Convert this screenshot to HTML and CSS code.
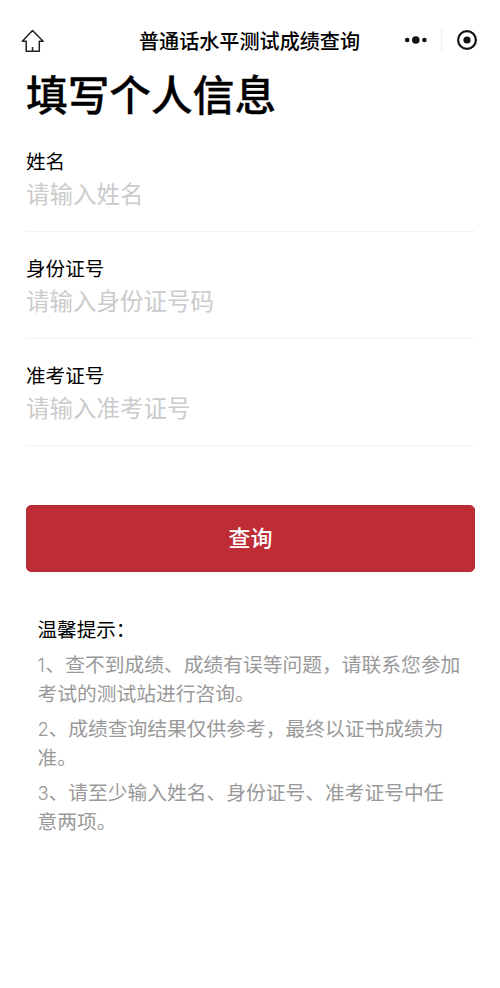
FILE: index.html
```html
<!DOCTYPE html>
<html lang="zh-CN">
<head>
<meta charset="utf-8">
<title>普通话水平测试成绩查询</title>
<link rel="stylesheet" href="styles.css">
</head>
<body>
<header class="nav">
  <svg class="home" width="24" height="24" viewBox="0 0 24 24"><path d="M11.5 1.5 L22.2 12.3 H18.3 V22.2 H5.2 V12.3 H1.3 Z M11.5 22 V18"/></svg>
  <div class="nav-title">普通话水平测试成绩查询</div>
  <div class="capsule">
    <svg width="24" height="10" viewBox="0 0 24 10"><circle cx="3.2" cy="5" r="2.3"/><circle cx="11.8" cy="5" r="3.8"/><circle cx="20.4" cy="5" r="2.3"/></svg>
    <span class="divider"></span>
    <svg width="22" height="22" viewBox="0 0 22 22"><circle class="ring" cx="11" cy="11" r="8.9"/><circle cx="11" cy="11" r="3.6"/></svg>
  </div>
</header>
<main>
  <h1>填写个人信息</h1>
  <form>
    <div class="field"><label>姓名</label><p class="hint">请输入姓名</p></div>
    <div class="field"><label>身份证号</label><p class="hint">请输入身份证号码</p></div>
    <div class="field"><label>准考证号</label><p class="hint">请输入准考证号</p></div>
    <button type="button">查询</button>
  </form>
  <section class="tips">
    <h2>温馨提示：</h2>
    <p><span class="num one">1</span>、查不到成绩、成绩有误等问题，请联系您参加<br>考试的测试站进行咨询。</p>
    <p><span class="num">2</span>、成绩查询结果仅供参考，最终以证书成绩为<br>准。</p>
    <p><span class="num">3</span>、请至少输入姓名、身份证号、准考证号中任<br>意两项。</p>
  </section>
</main>
</body>
</html>
```
FILE: styles.css
```css
* { box-sizing: border-box; }
body { margin: 0; height: 988px; background: #fff; color: #111; font-family: "Liberation Sans", "Noto Sans CJK SC", sans-serif; }
h1, h2, p { margin: 0; font-weight: 400; }
svg { display: block; }
.nav { height: 70px; padding: 11px 22px 0 21px; display: grid; grid-template-columns: 90px 1fr 90px; align-items: center; }
.home { fill: none; stroke: #222; stroke-width: 1.5; stroke-linejoin: round; }
.nav-title { padding-top: 2px; font-size: 20.1px; line-height: 30px; font-weight: 500; text-align: center; white-space: nowrap; color: #000; }
.capsule { display: flex; align-items: center; justify-content: flex-end; gap: 14px; padding-bottom: 1px; fill: #111; }
.divider { width: 1px; height: 24px; margin-left: -1px; background: #eee; }
.ring { fill: none; stroke: #111; stroke-width: 2.2; }
main { padding: 0 25px 0 26px; }
h1 { padding-top: 1px; font-size: 41.7px; line-height: 52px; font-weight: 500; color: #000; -webkit-text-stroke: 0.3px #000; white-space: nowrap; }
form { padding-top: 24px; }
.field { height: 107px; }
.field::after { content: ""; display: block; height: 1px; margin-top: 19px; background: #f2f2f2; }
label { display: block; font-size: 19.6px; line-height: 30px; color: #000; }
.hint { height: 35px; padding-top: 1px; font-size: 23.5px; line-height: 34px; color: #cbcbcb; }
button { display: block; width: 100%; height: 67px; margin-top: 37px; padding: 0 0 5px; border: 1px solid #b22d38; border-radius: 5px; background: #be2d36; color: #fff; font: 500 22px "Noto Sans CJK SC", sans-serif; }
.tips { padding: 44px 0 0 11.5px; white-space: nowrap; }
.tips h2 { font-size: 19.6px; line-height: 29px; margin-bottom: 6px; color: #000; }
.tips p { font-size: 19.75px; line-height: 29px; margin-bottom: 6px; color: #999; }
.num { display: inline-block; width: 11px; font-family: Inter, sans-serif; font-size: 18.5px; font-weight: 300; line-height: 1; }
.one { width: 8px; }
```
